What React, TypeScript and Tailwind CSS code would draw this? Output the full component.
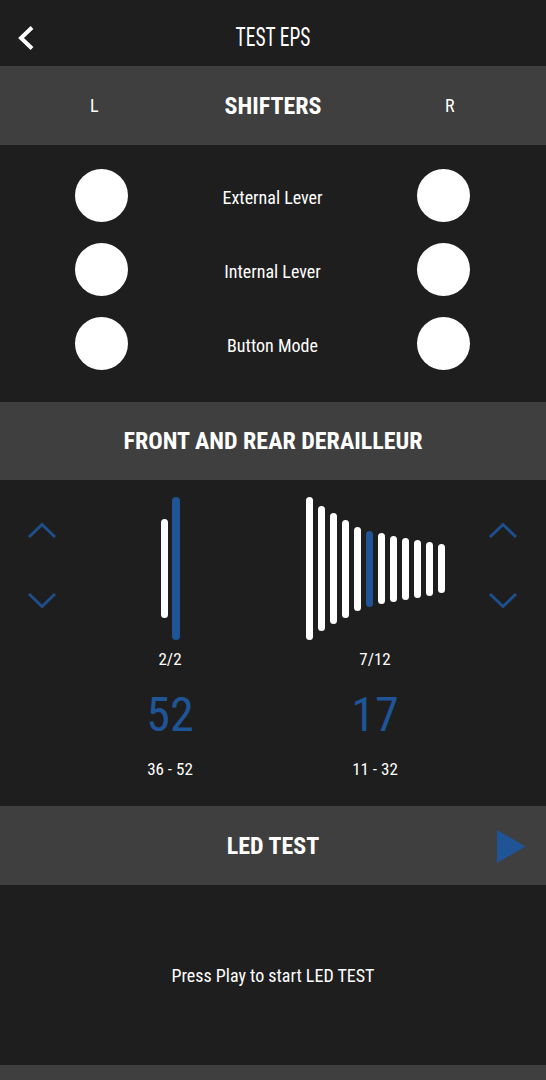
const font = { fontFamily: '"Roboto Condensed", "Liberation Sans Narrow", Roboto, sans-serif' }

const blue = 'bg-[#1f5597]'
const rearBars = [143, 125, 111, 98, 84, 76, 71, 66, 62, 58, 54, 49]
const shifterRows = ['External Lever', 'Internal Lever', 'Button Mode']

function Band({ children, h = 'h-[79px]' }: { children: React.ReactNode; h?: string }) {
  return (
    <div className={`relative ${h} bg-[#3f3f3f] flex items-center justify-center`}>
      {children}
    </div>
  )
}

function Chevron({ up }: { up?: boolean }) {
  return (
    <svg width="30" height="17" viewBox="0 0 30 17" fill="none">
      <polyline
        points={up ? '2,15 15,2.5 28,15' : '2,2 15,14.5 28,2'}
        stroke="#1d4f8c"
        strokeWidth="3"
      />
    </svg>
  )
}

function Arrows({ w }: { w: string }) {
  return (
    <div className={`${w} flex flex-col items-center pt-[25px] gap-[53px]`}>
      <Chevron up />
      <Chevron />
    </div>
  )
}

function Readout({ ratio, teeth, range }: { ratio: string; teeth: string; range: string }) {
  return (
    <div className="flex flex-col items-center text-white">
      <div className="mt-[7px] text-[17px] leading-[24px]">{ratio}</div>
      <div className="mt-[20px] text-[48px] leading-none text-[#1f5597]">{teeth}</div>
      <div className="mt-[18px] text-[17px] leading-[24px]">{range}</div>
    </div>
  )
}

export default function App() {
  return (
    <div className="w-[546px] h-[1080px] overflow-hidden bg-[#1e1e1e] text-white" style={font}>
      <div className="h-[66px] relative flex items-center justify-center pt-[9px]">
        <svg className="absolute left-[17px] top-[25px]" width="20" height="26" viewBox="0 0 20 26" fill="none">
          <polyline points="15,2.5 4,13 15,23.5" stroke="white" strokeWidth="4" />
        </svg>
        <span className="inline-block text-[25px] scale-x-[0.78]">TEST EPS</span>
      </div>

      <Band>
        <span className="absolute left-[90px] text-[18px]">L</span>
        <span className="text-[24px] font-bold">SHIFTERS</span>
        <span className="absolute left-[445px] text-[18px]">R</span>
      </Band>

      <div className="h-[257px] flex flex-col pt-[24px] gap-[21px]">
        {shifterRows.map((label) => (
          <div key={label} className="flex items-center justify-between pl-[75px] pr-[76px]">
            <div className="w-[53px] h-[53px] rounded-full bg-white" />
            <span className="text-[18px] pt-[3px]">{label}</span>
            <div className="w-[53px] h-[53px] rounded-full bg-white" />
          </div>
        ))}
      </div>

      <Band h="h-[78px]">
        <span className="text-[24px] font-bold">FRONT AND REAR DERAILLEUR</span>
      </Band>

      <div className="h-[326px] flex pt-[17px]">
        <Arrows w="w-[84px]" />
        <div className="w-[172px] flex flex-col items-center">
          <div className="h-[143px] flex items-center gap-[4px]">
            <div className="w-[7px] h-[99px] rounded-full bg-white" />
            <div className={`w-[8px] h-[143px] rounded-full ${blue}`} />
          </div>
          <Readout ratio="2/2" teeth="52" range="36 - 52" />
        </div>
        <div className="w-[19px]" />
        <div className="w-[200px] flex flex-col items-center">
          <div className="h-[143px] flex items-center gap-[5px]">
            {rearBars.map((h, i) => (
              <div
                key={i}
                className={`w-[7px] rounded-full ${i === 5 ? blue : 'bg-white'}`}
                style={{ height: h }}
              />
            ))}
          </div>
          <Readout ratio="7/12" teeth="17" range="11 - 32" />
        </div>
        <Arrows w="w-[56px]" />
      </div>

      <Band>
        <span className="text-[24px] font-bold">LED TEST</span>
        <svg className="absolute left-[497px] top-[24px]" width="29" height="33" viewBox="0 0 29 33">
          <path d="M0 0 L28.5 16.5 L0 33 Z" fill="#1f5597" />
        </svg>
      </Band>

      <div className="h-[180px] flex items-center justify-center">
        <span className="text-[18px]">Press Play to start LED TEST</span>
      </div>

      <div className="h-[40px] bg-[#3f3f3f]" />
    </div>
  )
}
